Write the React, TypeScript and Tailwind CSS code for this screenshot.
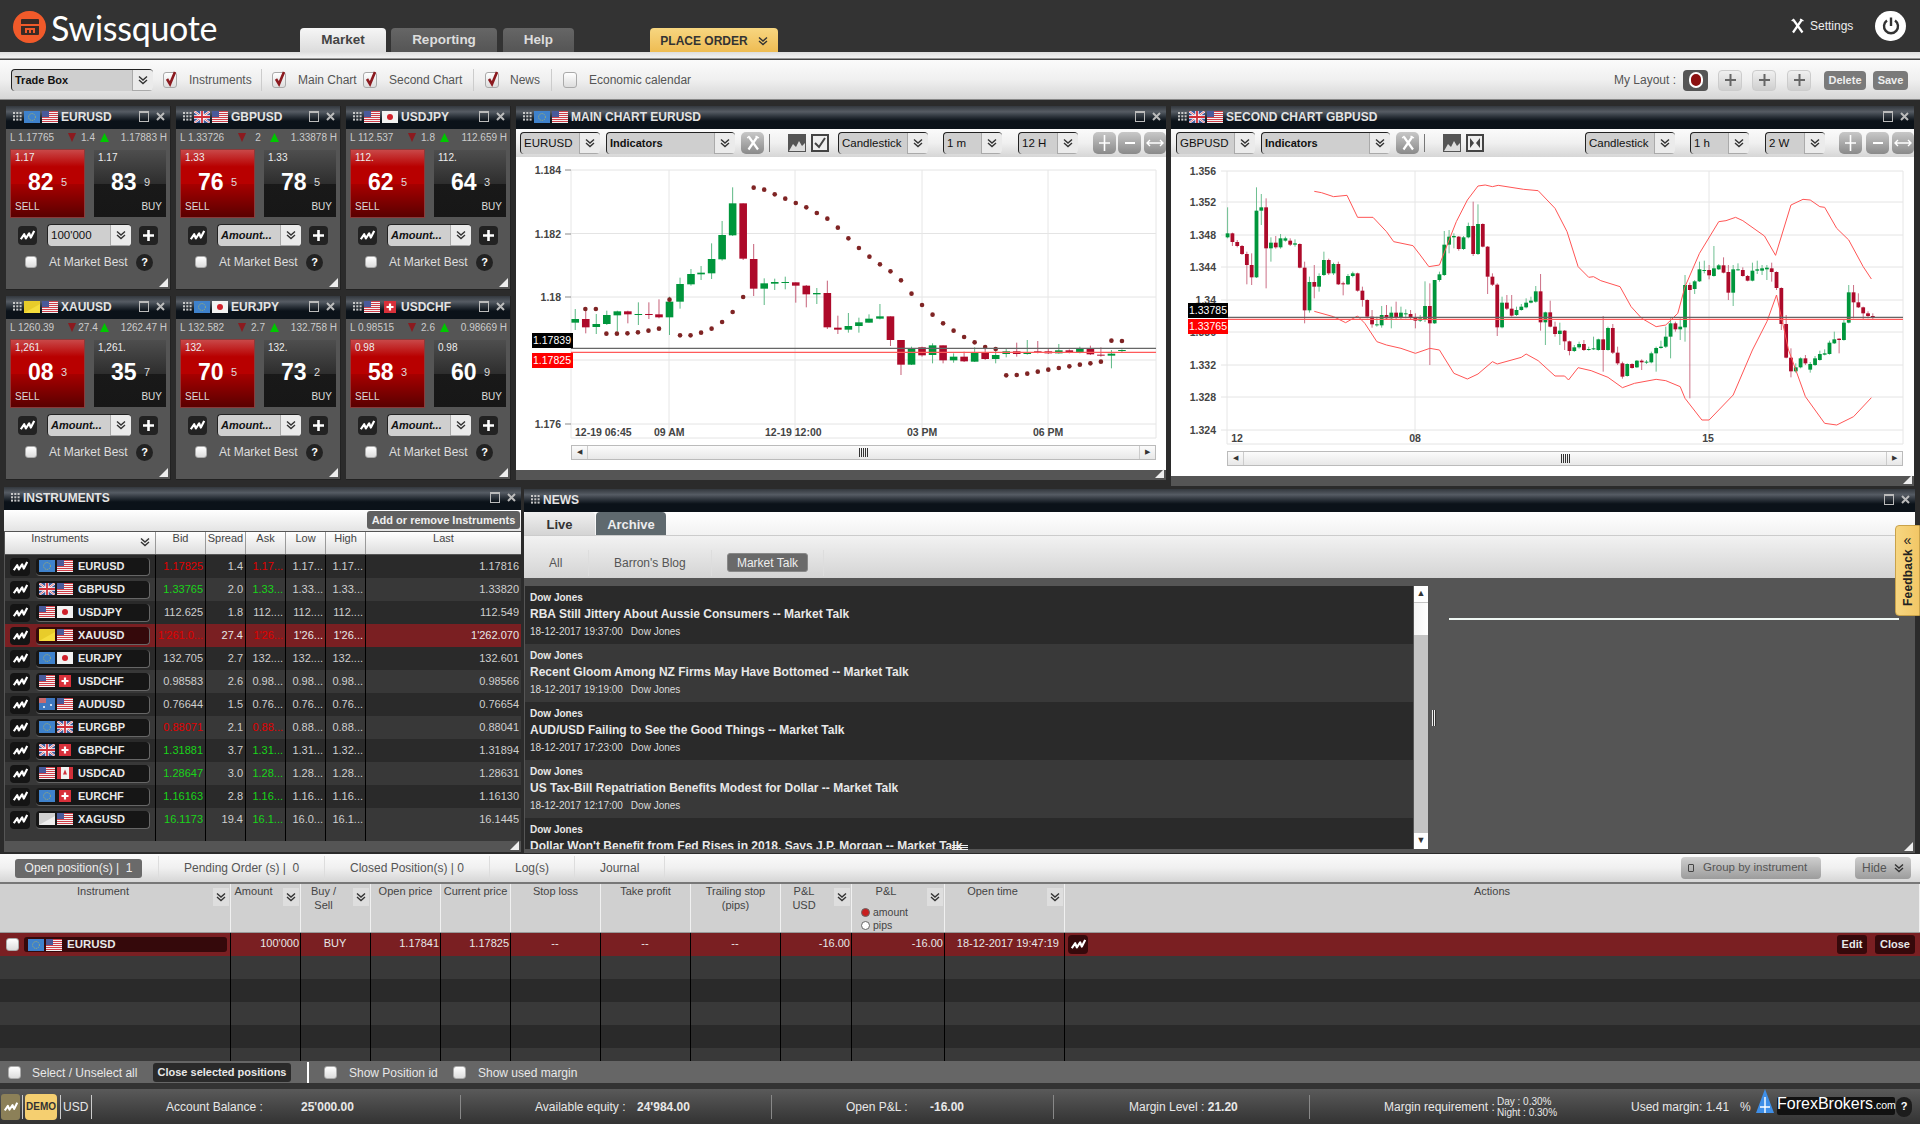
import React from "react";

const CHEV_BTN = "flex items-center justify-center";

function Chevs({ className = "text-[#333]" }: { className?: string }) {
  return (
    <svg width="10" height="10" viewBox="0 0 10 10" className={className} fill="none" stroke="currentColor" strokeWidth="1.4">
      <path d="M1 1.5 L5 5 L9 1.5" />
      <path d="M1 5 L5 8.5 L9 5" />
    </svg>
  );
}

function Zig({ w = 15, h = 11 }: { w?: number; h?: number }) {
  return (
    <svg width={w} height={h} viewBox="0 0 18 13" fill="none" stroke="white" strokeWidth="2.6" strokeLinejoin="round">
      <path d="M1 11 L5 5 L7 10 L11 4 L13 9 L17 1" />
    </svg>
  );
}

function ChartBtn({ className = "w-[19px] h-[19px] bg-[#222]" }: { className?: string }) {
  return (
    <div className={`${className} rounded-[4px] flex items-center justify-center shrink-0`}>
      <Zig />
    </div>
  );
}

function Flag({ code }: { code: string }) {
  let inner: React.ReactNode = null;
  if (code === "US") {
    inner = (
      <>
        <rect width="16" height="12" fill="#f4f4f4" />
        {[0, 2, 4, 6, 8, 10].map((y) => (
          <rect key={y} y={y} width="16" height="1" fill="#d0404a" />
        ))}
        <rect width="7" height="6" fill="#4a5a9a" />
      </>
    );
  } else if (code === "EU") {
    inner = (
      <>
        <rect width="16" height="12" fill="#3f82cc" />
        <circle cx="8" cy="6" r="3.4" fill="none" stroke="#b8b85a" strokeWidth="0.9" strokeDasharray="1 1" />
      </>
    );
  } else if (code === "GB") {
    inner = (
      <>
        <rect width="16" height="12" fill="#3b5a9e" />
        <path d="M0 0 L16 12 M16 0 L0 12" stroke="#fff" strokeWidth="2.2" />
        <path d="M0 0 L16 12 M16 0 L0 12" stroke="#d0404a" strokeWidth="0.8" />
        <path d="M8 0 V12 M0 6 H16" stroke="#fff" strokeWidth="3.4" />
        <path d="M8 0 V12 M0 6 H16" stroke="#d0303a" strokeWidth="1.8" />
      </>
    );
  } else if (code === "JP") {
    inner = (
      <>
        <rect width="16" height="12" fill="#f2f2f2" />
        <circle cx="8" cy="6" r="3" fill="#d0202a" />
      </>
    );
  } else if (code === "CH") {
    inner = (
      <>
        <rect x="2" width="12" height="12" fill="#d8303a" />
        <path d="M8 2.5 V9.5 M4.5 6 H11.5" stroke="#fff" strokeWidth="2.2" />
      </>
    );
  } else if (code === "AU") {
    inner = (
      <>
        <rect width="16" height="12" fill="#3f78c0" />
        <rect width="7" height="5" fill="#c86a70" />
        <circle cx="12" cy="7" r="1" fill="#fff" />
        <circle cx="5" cy="9" r="1" fill="#fff" />
      </>
    );
  } else if (code === "CA") {
    inner = (
      <>
        <rect width="16" height="12" fill="#f2f2f2" />
        <rect width="4" height="12" fill="#d0303a" />
        <rect x="12" width="4" height="12" fill="#d0303a" />
        <path d="M8 2.5 L10 7.5 H6 Z" fill="#d0303a" />
      </>
    );
  } else if (code === "XAU") {
    inner = (
      <>
        <rect width="16" height="12" fill="#e8cc2a" />
        <path d="M0 12 L16 3 V12 Z" fill="#f5dd3c" />
      </>
    );
  } else {
    inner = (
      <>
        <rect width="16" height="12" fill="#d0d0d0" />
        <path d="M0 12 L16 3 V12 Z" fill="#eeeeee" />
      </>
    );
  }
  return (
    <svg width="16" height="12" viewBox="0 0 16 12" className="shrink-0">
      {inner}
    </svg>
  );
}

function Check({ checked = false, size = "w-[14px] h-[16px]" }: { checked?: boolean; size?: string }) {
  return (
    <div className={`${size} rounded-[3px] bg-gradient-to-b from-[#ffffff] to-[#dddddd] border border-[#aaa] shrink-0 relative`}>
      {checked && (
        <svg width="14" height="18" viewBox="0 0 14 18" className="absolute left-[0px] -top-[3px]" fill="none" stroke="#8c1a1f" strokeWidth="2.6">
          <path d="M3 9 L6 14 L11 2" />
        </svg>
      )}
    </div>
  );
}

function Combo({ label, w, italic, bold = true }: { label: string; w: string; italic?: boolean; bold?: boolean }) {
  return (
    <div className={`${w} h-[22px] shrink-0 flex rounded-[4px] border-t border-l border-[#222] bg-[#cfcfcf] overflow-hidden`}>
      <div className={`flex-1 min-w-0 pl-[3px] flex items-center text-[#111] whitespace-nowrap ${bold ? "font-bold text-[11px]" : "text-[11.5px]"} ${italic ? "italic" : ""}`}>
        {label}
      </div>
      <div className={`${CHEV_BTN} w-[21px] h-[21px] bg-[#ebebeb] border-l border-[#aaa] border-b`}>
        <Chevs />
      </div>
    </div>
  );
}

function GridDots() {
  return (
    <svg width="9" height="9" viewBox="0 0 9 9" className="shrink-0" fill="#c8c8c8">
      {[0, 3.3, 6.6].flatMap((y) => [0, 3.3, 6.6].map((x) => <rect key={`${x}-${y}`} x={x} y={y} width="2" height="2" />))}
    </svg>
  );
}

function WinBtns() {
  return (
    <div className="ml-auto flex items-center gap-[7px] pr-[5px] shrink-0">
      <div className="w-[10px] h-[11px] border border-[#bbb] border-t-2" />
      <svg width="9" height="9" viewBox="0 0 9 9" stroke="#bbb" strokeWidth="2">
        <path d="M1 1 L8 8 M8 1 L1 8" />
      </svg>
    </div>
  );
}

const headGrad = "bg-gradient-to-b from-[#33383e] via-[#565c64] via-25% to-[#0b1219] to-65%";

function PanelHead({ children }: { children: React.ReactNode }) {
  return (
    <div className={`h-[23px] shrink-0 flex items-center pl-[7px] pb-[2px] gap-[2px] ${headGrad} text-[12px] font-bold text-[#e4e4e4] whitespace-nowrap`}>
      <GridDots />
      {children}
      <WinBtns />
    </div>
  );
}

function Corner() {
  return (
    <svg width="9" height="9" viewBox="0 0 9 9" className="absolute right-[2px] bottom-[2px]">
      <path d="M9 0 V9 H0 Z" fill="#eee" />
    </svg>
  );
}

type Box = {
  a: string;
  b: string;
  name: string;
  low: string;
  spread: string;
  high: string;
  sPre: string;
  sBig: string;
  sPip: string;
  bBig: string;
  bPip: string;
  amount?: string;
};

const boxes: Box[] = [
  { a: "EU", b: "US", name: "EURUSD", low: "L 1.17765", spread: "1.4", high: "1.17883 H", sPre: "1.17", sBig: "82", sPip: "5", bBig: "83", bPip: "9", amount: "100'000" },
  { a: "GB", b: "US", name: "GBPUSD", low: "L 1.33726", spread: "2", high: "1.33878 H", sPre: "1.33", sBig: "76", sPip: "5", bBig: "78", bPip: "5" },
  { a: "US", b: "JP", name: "USDJPY", low: "L 112.537", spread: "1.8", high: "112.659 H", sPre: "112.", sBig: "62", sPip: "5", bBig: "64", bPip: "3" },
  { a: "XAU", b: "US", name: "XAUUSD", low: "L 1260.39", spread: "27.4", high: "1262.47 H", sPre: "1,261.", sBig: "08", sPip: "3", bBig: "35", bPip: "7" },
  { a: "EU", b: "JP", name: "EURJPY", low: "L 132.582", spread: "2.7", high: "132.758 H", sPre: "132.", sBig: "70", sPip: "5", bBig: "73", bPip: "2" },
  { a: "US", b: "CH", name: "USDCHF", low: "L 0.98515", spread: "2.6", high: "0.98669 H", sPre: "0.98", sBig: "58", sPip: "3", bBig: "60", bPip: "9" },
];

function Tile({ side, pre, big, pip }: { side: "SELL" | "BUY"; pre: string; big: string; pip: string }) {
  const sell = side === "SELL";
  return (
    <div
      className={`h-[69px] grid grid-rows-[16px_32px_21px] text-white border ${
        sell
          ? "w-[75px] border-[#8a3a3a] bg-[linear-gradient(#c94848_0%,#b80000_25%,#b80000_50%,#a80000_50%,#5a0000_100%)]"
          : "w-[74px] border-[#555] bg-[linear-gradient(#4e4e4e_0%,#2e2e2e_50%,#191919_50%,#171717_100%)]"
      }`}
    >
      <div className="pl-[4px] text-[10px] leading-[16px] text-[#eee]">{pre}</div>
      <div className="pl-[17px] flex items-center">
        <span className="text-[23px] font-bold w-[33px]">{big}</span>
        <span className="text-[11px] text-[#ddd]">{pip}</span>
      </div>
      <div className={`px-[4px] text-[10px] text-[#ddd] leading-[18px] ${sell ? "text-left" : "text-right"}`}>{side}</div>
    </div>
  );
}

function TradeBox({ b }: { b: Box }) {
  return (
    <div className="w-[165px] h-[184px] bg-[#555] relative flex flex-col border-r border-b border-[#222]">
      <PanelHead>
        <Flag code={b.a} />
        <Flag code={b.b} />
        <span className="ml-[1px]">{b.name}</span>
      </PanelHead>
      <div className="h-[16px] flex items-center pl-[4px] pr-[3px] text-[10px] text-[#ccc] whitespace-nowrap">
        <span className="w-[58px] shrink-0">{b.low}</span>
        <svg width="8" height="9" viewBox="0 0 8 9" className="shrink-0" fill="#8c1a1f">
          <path d="M0 0 H8 L4 9 Z" />
        </svg>
        <span className="w-[24px] text-center shrink-0">{b.spread}</span>
        <svg width="9" height="9" viewBox="0 0 9 9" className="shrink-0" fill="#00c800">
          <path d="M0 9 H9 L4.5 0 Z" />
        </svg>
        <span className="flex-1 text-right">{b.high}</span>
      </div>
      <div className="mt-[4px] pl-[4px] flex gap-[8px]">
        <Tile side="SELL" pre={b.sPre} big={b.sBig} pip={b.sPip} />
        <Tile side="BUY" pre={b.sPre} big={b.bBig} pip={b.bPip} />
      </div>
      <div className="mt-[6px] h-[22px] flex items-center pl-[12px]">
        <ChartBtn />
        <Combo label={b.amount ?? "Amount..."} w="w-[84px] ml-[10px]" italic={!b.amount} bold={!b.amount} />
        <div className="ml-[8px] w-[19px] h-[19px] rounded-[4px] bg-[#222] flex items-center justify-center">
          <svg width="11" height="11" viewBox="0 0 11 11" stroke="white" strokeWidth="2.6">
            <path d="M5.5 0 V11 M0 5.5 H11" />
          </svg>
        </div>
      </div>
      <div className="mt-[6px] h-[20px] flex items-center pl-[19px] text-[12px] text-[#ddd]">
        <Check size="w-[12px] h-[12px]" />
        <span className="ml-[12px] w-[87px] whitespace-nowrap">At Market Best</span>
        <div className="w-[17px] h-[17px] rounded-full bg-[#222] text-white text-[11px] font-bold flex items-center justify-center">?</div>
      </div>
      <Corner />
    </div>
  );
}

// [green, bodyTop, bodyBottom, wickTop, wickBottom] in reference crop units
type Candle = [number, number, number, number, number];

const mainCandles: [number, number, number, number, number, number][] = [
  [155, 1, 507, 518, 477, 540], [180, 0, 507, 532, 480, 550], [205, 1, 522, 531, 492, 552], [230, 1, 495, 522, 482, 525],
  [255, 1, 484, 496, 482, 545], [280, 0, 484, 493, 482, 520], [305, 1, 492, 495, 457, 525], [330, 0, 492, 495, 457, 507],
  [354, 0, 493, 502, 448, 505], [379, 1, 455, 502, 440, 555], [404, 1, 402, 455, 383, 476], [430, 1, 372, 403, 357, 407],
  [454, 1, 368, 373, 348, 390], [479, 1, 327, 370, 280, 387], [504, 1, 255, 328, 213, 332], [529, 1, 160, 256, 112, 258],
  [554, 0, 160, 326, 160, 330], [579, 0, 327, 416, 282, 438], [604, 1, 400, 416, 385, 465], [629, 1, 396, 401, 386, 420],
  [654, 1, 396, 399, 380, 418], [679, 0, 397, 407, 397, 458], [704, 0, 407, 433, 405, 472], [729, 1, 429, 433, 414, 462],
  [754, 0, 429, 532, 392, 537], [779, 0, 533, 539, 497, 552], [804, 1, 528, 539, 489, 548], [829, 1, 517, 528, 503, 548],
  [853, 1, 506, 518, 493, 518], [879, 1, 499, 506, 462, 508], [904, 0, 499, 570, 499, 588], [929, 0, 570, 644, 570, 675],
  [954, 1, 594, 644, 590, 645], [979, 0, 592, 616, 590, 620], [1004, 1, 586, 615, 580, 640], [1029, 0, 586, 631, 586, 640],
  [1054, 1, 620, 631, 610, 638], [1079, 0, 620, 634, 605, 636], [1104, 1, 609, 635, 592, 636], [1129, 0, 609, 627, 585, 630],
  [1154, 1, 615, 627, 600, 640], [1179, 1, 604, 612, 595, 622], [1204, 0, 604, 612, 578, 620], [1229, 1, 607, 612, 570, 614],
  [1254, 0, 604, 607, 573, 610], [1279, 0, 604, 610, 595, 612], [1304, 1, 601, 610, 582, 611], [1329, 0, 601, 609, 598, 610],
  [1354, 1, 595, 608, 590, 610], [1379, 0, 595, 613, 587, 615], [1404, 0, 614, 617, 592, 620], [1429, 1, 611, 617, 600, 655],
  [1454, 1, 600, 602, 598, 606],
];

const dots: [number, number][] = [
  [579, 113], [604, 119], [629, 133], [654, 146], [679, 159], [704, 172], [729, 189], [754, 206], [779, 233], [804, 265],
  [829, 294], [854, 320], [879, 343], [904, 364], [929, 391], [954, 431], [979, 465], [1004, 494], [1029, 520], [1054, 542],
  [1079, 561], [1104, 577], [1129, 591], [1154, 597], [179, 477], [204, 477], [229, 551], [254, 551], [279, 550], [304, 547],
  [329, 542], [354, 536], [379, 449], [404, 556], [429, 556], [454, 548], [479, 536], [504, 516], [529, 486], [554, 441],
  [1179, 676], [1204, 675], [1229, 671], [1254, 665], [1279, 659], [1304, 654], [1329, 649], [1354, 644], [1379, 640],
  [1404, 635], [1429, 572], [1454, 573],
];

// second chart: candles run from x=130, one every 10 units
const secondCandles: Candle[] = [
  [1, 250, 262, 172, 265], [0, 250, 276, 248, 288], [0, 276, 288, 270, 292], [0, 288, 312, 285, 315], [0, 312, 345, 305, 403],
  [0, 345, 382, 310, 405], [1, 182, 382, 112, 384], [1, 172, 182, 132, 225], [0, 172, 295, 145, 415], [1, 278, 295, 262, 335],
  [0, 278, 292, 258, 296], [1, 265, 292, 252, 296], [1, 265, 272, 260, 275], [0, 272, 284, 265, 288], [1, 280, 284, 268, 290],
  [0, 282, 353, 280, 355], [0, 353, 481, 335, 520], [1, 396, 481, 380, 488], [0, 396, 410, 345, 445], [1, 378, 410, 370, 425],
  [1, 330, 375, 305, 378], [0, 330, 370, 326, 375], [1, 342, 370, 338, 375], [0, 342, 403, 335, 405], [0, 400, 403, 395, 436],
  [1, 378, 403, 372, 405], [1, 370, 378, 365, 382], [0, 370, 422, 368, 425], [0, 422, 450, 410, 470], [0, 450, 500, 448, 505],
  [0, 500, 523, 480, 533], [1, 523, 526, 500, 530], [1, 495, 526, 468, 533], [0, 495, 505, 465, 510], [1, 488, 505, 470, 535],
  [0, 488, 503, 455, 510], [1, 488, 503, 470, 510], [1, 490, 492, 478, 505], [0, 492, 503, 480, 508], [0, 503, 512, 490, 535],
  [1, 505, 512, 495, 516], [1, 468, 510, 394, 516], [0, 468, 520, 400, 645], [1, 390, 520, 412, 522], [1, 373, 390, 365, 395],
  [1, 284, 375, 243, 378], [1, 260, 284, 240, 310], [1, 258, 262, 250, 295], [0, 260, 297, 258, 302], [1, 262, 297, 258, 300],
  [1, 228, 262, 218, 265], [0, 228, 312, 155, 318], [1, 222, 312, 163, 315], [0, 222, 290, 220, 292], [0, 290, 380, 288, 432],
  [0, 380, 404, 370, 408], [0, 404, 532, 400, 558], [1, 458, 532, 440, 535], [0, 458, 476, 435, 480], [0, 476, 497, 435, 500],
  [1, 480, 495, 470, 498], [1, 470, 480, 462, 482], [1, 458, 472, 445, 475], [1, 452, 458, 440, 460], [1, 424, 455, 408, 458],
  [0, 424, 517, 372, 542], [1, 487, 517, 485, 585], [0, 487, 530, 452, 532], [0, 530, 552, 515, 560], [1, 542, 552, 518, 585],
  [0, 542, 574, 540, 600], [0, 574, 603, 572, 616], [1, 592, 603, 585, 606], [1, 582, 592, 575, 596], [0, 582, 600, 570, 603],
  [1, 597, 599, 590, 602], [1, 595, 598, 560, 600], [1, 568, 600, 566, 602], [0, 568, 600, 498, 665], [1, 534, 600, 530, 602],
  [0, 534, 608, 522, 612], [0, 608, 640, 590, 645], [0, 640, 680, 635, 686], [1, 642, 678, 640, 680], [0, 642, 654, 640, 656],
  [1, 632, 652, 630, 654], [0, 632, 637, 628, 660], [1, 635, 638, 630, 642], [1, 610, 637, 605, 640], [1, 594, 610, 590, 665],
  [1, 590, 594, 572, 596], [1, 560, 590, 530, 594], [1, 520, 560, 505, 625], [0, 520, 538, 515, 545], [1, 530, 538, 505, 570],
  [1, 405, 532, 375, 575], [0, 405, 420, 398, 745], [1, 394, 417, 390, 432], [1, 358, 394, 335, 396], [1, 360, 362, 332, 370],
  [0, 360, 376, 345, 388], [1, 355, 378, 288, 380], [1, 346, 358, 342, 360], [0, 346, 368, 322, 370], [0, 366, 428, 345, 450],
  [1, 358, 428, 345, 468], [1, 358, 360, 340, 362], [0, 360, 378, 352, 380], [0, 378, 392, 375, 394], [1, 362, 392, 338, 394],
  [1, 358, 362, 332, 372], [1, 355, 362, 345, 375], [1, 353, 358, 345, 390], [0, 355, 366, 338, 395], [0, 366, 414, 364, 420],
  [0, 414, 522, 412, 540], [0, 522, 623, 495, 625], [0, 623, 664, 595, 682], [1, 652, 664, 640, 668], [1, 625, 652, 622, 655],
  [0, 625, 640, 615, 645], [1, 642, 659, 636, 668], [1, 625, 645, 618, 648], [1, 612, 630, 602, 632], [1, 610, 614, 598, 616],
  [1, 578, 612, 572, 614], [1, 568, 580, 545, 582], [0, 566, 570, 565, 610], [1, 518, 570, 508, 572], [1, 427, 518, 405, 520],
  [0, 427, 457, 405, 505], [0, 457, 472, 430, 474], [0, 472, 490, 470, 508], [0, 490, 498, 484, 505], [0, 498, 503, 490, 510],
];

const upperBand =
  "310,124 325,128 350,140 378,136 400,202 432,202 460,245 475,275 515,287 530,315 548,350 570,345 590,270 605,215 628,150 650,108 665,105 680,110 692,106 745,118 775,122 810,175 835,245 858,350 880,382 890,380 905,392 945,410 968,470 990,505 1020,530 1040,525 1065,490 1080,410 1110,310 1150,215 1165,212 1185,202 1200,212 1245,258 1268,316 1300,165 1325,148 1340,150 1360,170 1370,172 1395,235 1420,270 1450,350 1467,387";
const lowerBand =
  "310,484 350,500 375,518 400,498 415,520 440,575 460,585 490,595 520,610 550,595 570,600 600,670 628,687 650,672 680,635 690,642 740,622 750,612 775,632 810,678 830,678 838,690 858,653 885,662 920,682 950,713 975,700 1020,688 1040,692 1070,710 1080,745 1115,810 1130,810 1180,735 1220,600 1250,515 1270,435 1295,600 1330,740 1370,820 1395,825 1430,800 1467,743";

const GREEN = "#00963c";
const RED = "#ad0a2a";

function MainChart() {
  const sx = (x: number) => x / 2.376 - 6;
  const sy = (y: number) => y / 3 - 7;
  const axis = "fill-[#444] text-[10.5px] font-bold";
  return (
    <svg width="650" height="286" className="shrink-0 block" fontFamily="'Liberation Sans',sans-serif">
      {[170, 233.5, 297, 360, 424].map((y) => (
        <line key={y} x1="55" x2="640" y1={y - 157} y2={y - 157} stroke="#e4e4e4" />
      ))}
      <line x1="55" x2="640" y1="281" y2="281" stroke="#e4e4e4" />
      {[55, 153, 279, 406, 532, 640].map((x) => (
        <line key={x} x1={x} x2={x} y1="13" y2="281" stroke="#e6e6e6" />
      ))}
      {[["1.184", 13], ["1.182", 77], ["1.18", 140], ["1.176", 267]].map(([t, y]) => (
        <text key={t} x="45" y={Number(y) + 4} textAnchor="end" className={axis}>
          {t}
        </text>
      ))}
      {[[44, 13], [44, 77], [44, 140], [44, 267]].map(([x, y]) => (
        <line key={y} x1={x + 5} x2={x + 11} y1={y} y2={y} stroke="#888" />
      ))}
      <text x="59" y="279" className={axis}>12-19 06:45</text>
      <text x="138" y="279" className={axis}>09 AM</text>
      <text x="249" y="279" className={axis}>12-19 12:00</text>
      <text x="391" y="279" className={axis}>03 PM</text>
      <text x="517" y="279" className={axis}>06 PM</text>
      {mainCandles.map(([x, g, t, b, wt, wb]) => (
        <g key={x}>
          <line x1={sx(x)} x2={sx(x)} y1={sy(wt)} y2={sy(wb)} stroke={g ? "#5cb884" : "#c66078"} />
          <rect x={sx(x) - 3.8} y={sy(t)} width="7.6" height={Math.max(1, (b - t) / 3)} fill={g ? GREEN : RED} />
        </g>
      ))}
      {dots.map(([x, y]) => (
        <circle key={`${x}-${y}`} cx={sx(x)} cy={sy(y)} r="2.3" fill="#7f2424" />
      ))}
      <line x1="55" x2="640" y1={sy(595)} y2={sy(595)} stroke="#666" strokeWidth="1.2" />
      <line x1="55" x2="640" y1={sy(607)} y2={sy(607)} stroke="#ff5a5a" strokeWidth="1.2" />
      <rect x="16" y="176" width="41" height="15" fill="#000" />
      <text x="36" y="187" textAnchor="middle" className="fill-white text-[10.5px]">1.17839</text>
      <rect x="16" y="196" width="41" height="15" fill="#f00" />
      <text x="36" y="207" textAnchor="middle" className="fill-white text-[10.5px]">1.17825</text>
    </svg>
  );
}

function SecondChart() {
  const k = 2.0768;
  const sx = (x: number) => x / k - 6;
  const sy = (y: number) => y / 3 - 7;
  const axis = "fill-[#444] text-[10.5px] font-bold";
  const pts = (s: string) =>
    s
      .split(" ")
      .map((p) => {
        const [x, y] = p.split(",").map(Number);
        return `${sx(x)},${sy(y)}`;
      })
      .join(" ");
  const ys: [string, number][] = [
    ["1.356", 14], ["1.352", 45], ["1.348", 78], ["1.344", 110], ["1.34", 143], ["1.336", 175], ["1.332", 208], ["1.328", 240], ["1.324", 273],
  ];
  return (
    <svg width="743" height="292" className="shrink-0 block" fontFamily="'Liberation Sans',sans-serif">
      {ys.map(([t, y]) => (
        <g key={t}>
          <line x1="50" x2="732" y1={y} y2={y} stroke="#e4e4e4" />
          <text x="45" y={y + 4} textAnchor="end" className={axis}>{t}</text>
        </g>
      ))}
      <line x1="56" x2="732" y1="287" y2="287" stroke="#e4e4e4" />
      {[56, 244, 538, 732].map((x) => (
        <line key={x} x1={x} x2={x} y1="14" y2="287" stroke="#e6e6e6" />
      ))}
      <text x="66" y="285" textAnchor="middle" className={axis}>12</text>
      <text x="244" y="285" textAnchor="middle" className={axis}>08</text>
      <text x="537" y="285" textAnchor="middle" className={axis}>15</text>
      {secondCandles.map(([g, t, b, wt, wb], i) => {
        const x = sx(130 + i * 10);
        return (
          <g key={i}>
            <line x1={x} x2={x} y1={sy(wt)} y2={sy(wb)} stroke={g ? "#5cb884" : "#c66078"} strokeWidth="0.9" />
            <rect x={x - 1.9} y={sy(t)} width="3.8" height={Math.max(1, (b - t) / 3)} fill={g ? GREEN : RED} />
          </g>
        );
      })}
      <polyline points={pts(upperBand)} fill="none" stroke="#f55" strokeWidth="1" />
      <polyline points={pts(lowerBand)} fill="none" stroke="#f55" strokeWidth="1" />
      <line x1="56" x2="732" y1={sy(502)} y2={sy(502)} stroke="#666" strokeWidth="1.2" />
      <line x1="56" x2="732" y1={sy(508)} y2={sy(508)} stroke="#ff5a5a" strokeWidth="1.2" />
      <rect x="17" y="146" width="40" height="15" fill="#000" />
      <text x="37" y="157" textAnchor="middle" className="fill-white text-[10.5px]">1.33785</text>
      <rect x="17" y="162" width="40" height="15" fill="#f00" />
      <text x="37" y="173" textAnchor="middle" className="fill-white text-[10.5px]">1.33765</text>
    </svg>
  );
}

function HScroll({ className }: { className: string }) {
  return (
    <div className={`${className} h-[15px] shrink-0 flex border border-[#bbb] bg-gradient-to-b from-[#fbfbfb] to-[#e8e8e8]`}>
      <div className="w-[15px] flex items-center justify-center text-[7px] text-[#333]">◀</div>
      <div className="flex-1 border-x border-[#ccc] flex items-center justify-center">
        <div className="w-[9px] h-[9px] bg-[repeating-linear-gradient(90deg,#333_0px,#333_1px,transparent_1px,transparent_2px)]" />
      </div>
      <div className="w-[15px] flex items-center justify-center text-[7px] text-[#333]">▶</div>
    </div>
  );
}

function RoundBtn({ children, w = "w-[23px]", ml = "" }: { children: React.ReactNode; w?: string; ml?: string }) {
  return (
    <div className={`${w} ${ml} h-[22px] shrink-0 rounded-[5px] bg-gradient-to-b from-[#c8c8c8] to-[#8a8a8a] flex items-center justify-center text-white`}>
      {children}
    </div>
  );
}

function Wrench({ w = 14, h = 16, color = "white" }: { w?: number; h?: number; color?: string }) {
  return (
    <svg width={w} height={h} viewBox="0 0 14 16" fill="none" stroke={color}>
      <path d="M3 2 L12 14.5" strokeWidth="2.2" />
      <path d="M11.5 1.5 L2.5 14.5" strokeWidth="2.2" />
      <path d="M1.2 3 L3.5 1 M9.5 1 L13 3" strokeWidth="1.4" />
    </svg>
  );
}

function Plus() {
  return (
    <svg width="13" height="16" viewBox="0 0 13 16" stroke="white" strokeWidth="1.6">
      <path d="M6.5 0 V16 M1 8 H12" />
    </svg>
  );
}

function ChartTools({ second }: { second?: boolean }) {
  return (
    <>
      <RoundBtn ml="ml-[6px]">
        <Wrench />
      </RoundBtn>
      <div className="ml-[5px] w-px h-[18px] bg-[#777] shrink-0" />
      <div className="ml-[18px] w-[18px] h-[18px] bg-[#555] shrink-0 flex items-end">
        <svg width="18" height="14" viewBox="0 0 18 14" fill="#ddd">
          <path d="M1 13 L5 6 L8 9 L11 3 L14 8 L17 5 V13 Z" />
        </svg>
      </div>
      <div className="ml-[5px] w-[18px] h-[18px] border-2 border-[#444] bg-[#eee] shrink-0 flex items-center justify-center">
        {second ? (
          <svg width="12" height="12" viewBox="0 0 12 12" fill="#444">
            <path d="M1 1 L5 6 L1 11 Z M11 1 L7 6 L11 11 Z" />
          </svg>
        ) : (
          <svg width="12" height="12" viewBox="0 0 12 12" fill="none" stroke="#444" strokeWidth="2">
            <path d="M1 6 L5 10 L11 1" />
          </svg>
        )}
      </div>
    </>
  );
}

function ZoomBtns({ firstMl, gap2 }: { firstMl: string; gap2: string }) {
  return (
    <>
      <RoundBtn ml={firstMl}>
        <Plus />
      </RoundBtn>
      <RoundBtn ml={gap2}>
        <div className="w-[10px] h-[2px] bg-white" />
      </RoundBtn>
      <RoundBtn w="w-[22px]" ml="ml-[3px]">
        <svg width="18" height="10" viewBox="0 0 18 10" fill="none" stroke="white" strokeWidth="1.4">
          <path d="M1 5 H17 M4 2 L1 5 L4 8 M14 2 L17 5 L14 8" />
        </svg>
      </RoundBtn>
    </>
  );
}

const toolGrad = "bg-gradient-to-b from-[#fbfbfb] via-[#f0f0f0] to-[#d6d6d6]";

type Row = { a: string; b: string; n: string; bid: string; bc?: string; sp: string; ask: string; low: string; high: string; last: string; hot?: boolean };

const G = "text-[#19d419]";
const R = "text-[#e00000]";
const rows: Row[] = [
  { a: "EU", b: "US", n: "EURUSD", bid: "1.17825", bc: R, sp: "1.4", ask: "1.17...", low: "1.17...", high: "1.17...", last: "1.17816" },
  { a: "GB", b: "US", n: "GBPUSD", bid: "1.33765", bc: G, sp: "2.0", ask: "1.33...", low: "1.33...", high: "1.33...", last: "1.33820" },
  { a: "US", b: "JP", n: "USDJPY", bid: "112.625", sp: "1.8", ask: "112....", low: "112....", high: "112....", last: "112.549" },
  { a: "XAU", b: "US", n: "XAUUSD", bid: "1'261.0...", bc: R, sp: "27.4", ask: "1'26...", low: "1'26...", high: "1'26...", last: "1'262.070", hot: true },
  { a: "EU", b: "JP", n: "EURJPY", bid: "132.705", sp: "2.7", ask: "132....", low: "132....", high: "132....", last: "132.601" },
  { a: "US", b: "CH", n: "USDCHF", bid: "0.98583", sp: "2.6", ask: "0.98...", low: "0.98...", high: "0.98...", last: "0.98566" },
  { a: "AU", b: "US", n: "AUDUSD", bid: "0.76644", sp: "1.5", ask: "0.76...", low: "0.76...", high: "0.76...", last: "0.76654" },
  { a: "EU", b: "GB", n: "EURGBP", bid: "0.88071", bc: R, sp: "2.1", ask: "0.88...", low: "0.88...", high: "0.88...", last: "0.88041" },
  { a: "GB", b: "CH", n: "GBPCHF", bid: "1.31881", bc: G, sp: "3.7", ask: "1.31...", low: "1.31...", high: "1.32...", last: "1.31894" },
  { a: "US", b: "CA", n: "USDCAD", bid: "1.28647", bc: G, sp: "3.0", ask: "1.28...", low: "1.28...", high: "1.28...", last: "1.28631" },
  { a: "EU", b: "CH", n: "EURCHF", bid: "1.16163", bc: G, sp: "2.8", ask: "1.16...", low: "1.16...", high: "1.16...", last: "1.16130" },
  { a: "XAG", b: "US", n: "XAGUSD", bid: "16.1173", bc: G, sp: "19.4", ask: "16.1...", low: "16.0...", high: "16.1...", last: "16.1445" },
];

const cols = "grid grid-cols-[151px_50px_40px_40px_40px_40px_155px]";
const cell = "border-r border-black text-right pr-[2px] leading-[22px] whitespace-nowrap overflow-hidden";

function Instruments() {
  return (
    <div className="ml-[4px] w-[517px] h-[365px] bg-[#555] relative flex flex-col shrink-0">
      <PanelHead>
        <span className="ml-[1px]">INSTRUMENTS</span>
      </PanelHead>
      <div className="h-[21px] shrink-0 bg-gradient-to-b from-[#ffffff] to-[#e4e4e4] flex justify-end items-start pr-[1px] pt-[1px]">
        <div className="w-[153px] h-[18px] rounded-[3px] bg-[#606060] text-[#eee] text-[11px] font-bold flex items-center justify-center whitespace-nowrap">
          Add or remove Instruments
        </div>
      </div>
      <div className={`${cols} h-[24px] ml-px shrink-0 bg-gradient-to-b from-[#ffffff] to-[#dddddd] border-t border-[#555] border-b text-[11px] leading-[13px] text-[#444] text-center`}>
        <div className="border-r border-[#999] relative pr-[40px]">
          Instruments
          <div className="absolute right-[5px] top-[5px]">
            <Chevs />
          </div>
        </div>
        {["Bid", "Spread", "Ask", "Low", "High"].map((h) => (
          <div key={h} className="border-r border-[#999]">
            {h}
          </div>
        ))}
        <div>Last</div>
      </div>
      <div className="flex-1 ml-px bg-[#383838] flex flex-col overflow-hidden text-[11px] text-[#cfcfcf]">
        {rows.map((r, i) => (
          <div key={r.n} className={`${cols} h-[23px] shrink-0 ${r.hot ? "bg-[#7a1f22] text-[#e8e8e8]" : i % 2 ? "bg-[#383838]" : "bg-[#2a2a2a]"}`}>
            <div className="border-r border-black flex items-center pl-[5px]">
              <ChartBtn className="w-[20px] h-[18px] bg-[#141414]" />
              <div className={`ml-[6px] w-[114px] h-[18px] rounded-[4px] border-b border-r border-[#666] flex items-center pl-[3px] gap-[2px] text-[#e8e8e8] font-bold ${r.hot ? "bg-[#35090b]" : "bg-[#161616]"}`}>
                <Flag code={r.a} />
                <Flag code={r.b} />
                <span className="ml-[3px]">{r.n}</span>
              </div>
            </div>
            <div className={`${cell} ${r.bc ?? ""}`}>{r.bid}</div>
            <div className={cell}>{r.sp}</div>
            <div className={`${cell} ${r.bc ?? ""}`}>{r.ask}</div>
            <div className={cell}>{r.low}</div>
            <div className={cell}>{r.high}</div>
            <div className="text-right pr-[2px] leading-[22px]">{r.last}</div>
          </div>
        ))}
        <div className={`${cols} flex-1`}>
          {[0, 1, 2, 3, 4, 5].map((c) => (
            <div key={c} className="border-r border-black" />
          ))}
        </div>
      </div>
      <div className="h-[11px] shrink-0" />
      <Corner />
    </div>
  );
}

const news = [
  ["RBA Still Jittery About Aussie Consumers -- Market Talk", "18-12-2017 19:37:00"],
  ["Recent Gloom Among NZ Firms May Have Bottomed -- Market Talk", "18-12-2017 19:19:00"],
  ["AUD/USD Failing to See the Good Things -- Market Talk", "18-12-2017 17:23:00"],
  ["US Tax-Bill Repatriation Benefits Modest for Dollar -- Market Talk", "18-12-2017 12:17:00"],
  ["Dollar Won't Benefit from Fed Rises in 2018, Says J.P. Morgan -- Market Talk", "18-12-2017 11:30:00"],
];

function News() {
  return (
    <div className="ml-[3px] mt-[2px] w-[1391px] h-[364px] bg-[#555] relative flex flex-col shrink-0">
      <PanelHead>
        <span className="ml-[1px]">NEWS</span>
      </PanelHead>
      <div className="h-[24px] shrink-0 flex bg-gradient-to-b from-[#ffffff] to-[#f2f2f2] border-b border-[#ccc] text-[13px] font-bold">
        <div className="w-[71px] pt-[2px] rounded-t-[4px] bg-gradient-to-b from-[#f0f0f0] to-[#d4d4d4] text-[#333] flex items-center justify-center">Live</div>
        <div className="ml-px w-[70px] pt-[2px] rounded-t-[4px] bg-[#5f696e] text-[#eee] flex items-center justify-center">Archive</div>
      </div>
      <div className="h-[42px] pt-[11px] shrink-0 bg-gradient-to-b from-[#f2f2f2] to-[#d4d4d4] flex items-center text-[12px] text-[#555]">
        <span className="ml-[25px] w-[39px]">All</span>
        <div className="w-px h-[26px] bg-[#ddd]" />
        <span className="ml-[25px] w-[97px] whitespace-nowrap">Barron's Blog</span>
        <div className="w-px h-[26px] bg-[#ddd]" />
        <div className="ml-[15px] w-[81px] h-[19px] rounded-[3px] bg-[#6a6a6a] border border-[#888] text-[#eee] flex items-center justify-center whitespace-nowrap">Market Talk</div>
        <div className="ml-[15px] w-px h-[26px] bg-[#ddd]" />
      </div>
      <div className="flex-1 min-h-0 flex pt-[8px] pl-px">
        <div className="w-[888px] h-[263px] shrink-0 overflow-hidden">
          {news.map(([t, d], i) => (
            <div key={t} className={`h-[58px] pl-[5px] pt-[6px] text-[#e8e8e8] whitespace-nowrap ${i % 2 ? "bg-[#393939]" : "bg-[#2a2a2a]"}`}>
              <div className="text-[10px] font-bold leading-[12px]">Dow Jones</div>
              <div className="mt-[3px] text-[12px] font-bold leading-[14px]">{t}</div>
              <div className="mt-[5px] text-[10px] leading-[12px] text-[#ddd]">
                {d}
                <span className="ml-[8px]">Dow Jones</span>
              </div>
            </div>
          ))}
        </div>
        <div className="w-[14px] h-[263px] ml-px shrink-0 bg-[#c4c4c4] flex flex-col">
          <div className="h-[16px] bg-white flex items-center justify-center text-[9px] text-[#333]">▲</div>
          <div className="h-[32px] bg-gradient-to-r from-[#f4f4f4] to-white mt-px" />
          <div className="flex-1" />
          <div className="h-[16px] bg-white flex items-center justify-center text-[9px] text-[#333]">▼</div>
        </div>
        <div className="flex-1 relative">
          <div className="absolute left-[4px] top-[124px] w-[4px] h-[16px] bg-[repeating-linear-gradient(90deg,#eee_0px,#eee_1px,#333_1px,#333_2px)]" />
          <div className="absolute left-[21px] top-[32px] w-[450px] h-[2px] bg-[#f0f8f4]" />
        </div>
      </div>
      {/* little drag handle over the end of the last headline */}
      <div className="absolute left-[428px] top-[355px] w-[16px] h-[6px] bg-[repeating-linear-gradient(0deg,#eee_0px,#eee_1px,transparent_1px,transparent_2px)]" />
      <Corner />
    </div>
  );
}

const posCols = "grid grid-cols-[231px_70px_70px_70px_70px_90px_90px_90px_71px_93px_120px_855px]";

function SortBox() {
  return (
    <div className="absolute right-[1px] top-[4px] w-[16px] h-[18px] bg-[#dedede] flex items-center justify-center">
      <Chevs />
    </div>
  );
}

function Positions() {
  const heads: [React.ReactNode, boolean][] = [
    ["Instrument", true],
    ["Amount", true],
    [<>Buy /<br />Sell</>, true],
    ["Open price", false],
    ["Current price", false],
    ["Stop loss", false],
    ["Take profit", false],
    [<>Trailing stop<br />(pips)</>, false],
    [<>P&amp;L<br />USD</>, true],
    ["P&L", true],
    ["Open time", true],
    ["Actions", false],
  ];
  const vals = ["100'000", "BUY", "1.17841", "1.17825", "--", "--", "--", "-16.00", "-16.00", "18-12-2017 19:47:19"];
  const aligns = ["text-right", "text-center", "text-right", "text-right", "text-center", "text-center", "text-center", "text-right", "text-right", "text-right"];
  return (
    <div className="h-[207px] shrink-0 flex flex-col">
      <div className={`h-[28px] shrink-0 flex items-center ${toolGrad} text-[12px] text-[#555] whitespace-nowrap`}>
        <div className="ml-[15px] w-[127px] h-[19px] rounded-[3px] bg-[#6a6a6a] text-[#eee] flex items-center justify-center">Open position(s) |&nbsp;&nbsp;1</div>
        <div className="ml-[16px] w-px h-[24px] bg-[#ddd]" />
        <span className="ml-[25px] w-[140px]">Pending Order (s) |&nbsp;&nbsp;0</span>
        <div className="w-px h-[24px] bg-[#ddd]" />
        <span className="ml-[25px] w-[139px]">Closed Position(s) | 0</span>
        <div className="w-px h-[24px] bg-[#ddd]" />
        <span className="ml-[25px] w-[59px]">Log(s)</span>
        <div className="w-px h-[24px] bg-[#ddd]" />
        <span className="ml-[25px] w-[64px]">Journal</span>
        <div className="w-px h-[24px] bg-[#ddd]" />
        <div className="ml-auto w-[140px] h-[22px] rounded-[4px] bg-gradient-to-b from-[#cfcfcf] to-[#9c9c9c] flex items-center pl-[7px] gap-[9px] text-[11.5px]">
          <div className="w-[6px] h-[8px] border border-[#444] rounded-[1px]" />
          <span>Group by instrument</span>
        </div>
        <div className="ml-[34px] mr-[9px] w-[56px] h-[22px] rounded-[4px] bg-gradient-to-b from-[#cfcfcf] to-[#9c9c9c] flex items-center justify-between px-[7px]">
          <span>Hide</span>
          <Chevs />
        </div>
      </div>
      <div className={`${posCols} h-[51px] shrink-0 bg-[#d0d0d0] border-t-2 border-[#777] border-b border-b-[#999] text-[11px] leading-[14px] text-[#444] text-center`}>
        {heads.map(([h, sort], i) => (
          <div key={i} className={`relative border-r border-[#f0f0f0] ${sort ? "pr-[24px]" : ""}`}>
            {h}
            {sort && <SortBox />}
            {i === 9 && (
              <div className="absolute left-[9px] top-[22px] text-left leading-[13px] text-[10.5px]">
                <div className="flex items-center gap-[3px]">
                  <div className="w-[9px] h-[9px] rounded-full bg-[#c81e1e] border border-[#666]" />
                  amount
                </div>
                <div className="flex items-center gap-[3px]">
                  <div className="w-[9px] h-[9px] rounded-full bg-white border border-[#666]" />
                  pips
                </div>
              </div>
            )}
          </div>
        ))}
      </div>
      <div className="flex-1 flex flex-col overflow-hidden text-[11px] text-[#e8e8e8]">
        <div className={`${posCols} h-[23px] shrink-0 bg-[#7a1f22]`}>
          <div className="border-r border-black flex items-center pl-[6px]">
            <Check size="w-[13px] h-[13px]" />
            <div className="ml-[5px] w-[203px] h-[15px] rounded-[3px] bg-[#35090b] flex items-center pl-[4px] gap-[2px] font-bold">
              <Flag code="EU" />
              <Flag code="US" />
              <span className="ml-[3px] text-[11.5px]">EURUSD</span>
            </div>
          </div>
          {vals.map((v, i) => (
            <div key={i} className={`border-r border-black pr-[1px] leading-[21px] whitespace-nowrap ${aligns[i]} ${i === 9 ? "pr-[5px]" : ""}`}>
              {v}
            </div>
          ))}
          <div className="flex items-center pl-[3px] pr-[5px]">
            <ChartBtn className="w-[20px] h-[19px] bg-[#35090b]" />
            <div className="ml-auto w-[30px] h-[19px] rounded-[3px] bg-[#35090b] font-bold flex items-center justify-center">Edit</div>
            <div className="ml-[8px] w-[40px] h-[19px] rounded-[3px] bg-[#35090b] font-bold flex items-center justify-center">Close</div>
          </div>
        </div>
        {["bg-[#393939] h-[23px]", "bg-[#2a2a2a] h-[23px]", "bg-[#393939] h-[23px]", "bg-[#2a2a2a] h-[23px]", "bg-[#393939] flex-1"].map((c, r) => (
          <div key={r} className={`${posCols} ${c} shrink-0`}>
            {Array.from({ length: 11 }).map((_, i) => (
              <div key={i} className="border-r border-black" />
            ))}
          </div>
        ))}
      </div>
    </div>
  );
}

function StatusBar() {
  const sep = <div className="w-px h-[24px] bg-[#888] shrink-0" />;
  return (
    <div className="flex-1 bg-gradient-to-b from-[#5a5a5a] to-[#333] flex items-center text-[12px] text-[#e8e8e8] whitespace-nowrap [&>*]:shrink-0">
      <div className="ml-px w-[19px] h-[26px] rounded-[3px] bg-[#8c8058] flex items-center justify-center">
        <Zig w={14} h={12} />
      </div>
      <div className="ml-[2px] w-px h-[24px] bg-[#ccc]" />
      <div className="ml-[2px] w-[32px] h-[26px] rounded-[4px] bg-[#f5cf70] text-[#333] text-[10px] font-bold flex items-center justify-center">DEMO</div>
      <div className="ml-[3px] w-px h-[24px] bg-[#ccc]" />
      <span className="ml-[2px] w-[28px]">USD</span>
      <div className="w-px h-[24px] bg-[#ccc]" />
      <span className="ml-[74px] w-[135px]">Account Balance :</span>
      <span className="w-[159px] font-bold">25'000.00</span>
      {sep}
      <span className="ml-[74px] w-[102px]">Available equity :</span>
      <span className="w-[134px] font-bold">24'984.00</span>
      {sep}
      <span className="ml-[74px] w-[84px]">Open P&amp;L :</span>
      <span className="w-[123px] font-bold">-16.00</span>
      {sep}
      <span className="ml-[75px] w-[180px]">
        Margin Level : <b>21.20</b>
      </span>
      {sep}
      <span className="ml-[74px] w-[113px]">Margin requirement :</span>
      <div className="w-[134px] text-[10px] leading-[11px]">
        <div>Day : 0.30%</div>
        <div>Night : 0.30%</div>
      </div>
      <span className="w-[109px]">Used margin: 1.41</span>
      <span className="w-[16px]">%</span>
      <svg width="18" height="26" viewBox="0 0 18 26" className="-mt-[10px]">
        <path d="M9 0 L18 24 H0 Z" fill="#3f8fe8" />
        <path d="M9 8 V24 M4 18 H14" stroke="#fff" strokeWidth="1.4" />
      </svg>
      <div className="ml-[3px] w-[118px] h-[18px] bg-[#111] -mt-[1px] rounded-[2px] relative">
        <span className="absolute left-[0px] -top-[5px] text-[16px] text-white">
          ForexBrokers<span className="text-[10.5px]">.com</span>
        </span>
      </div>
      <div className="ml-px w-[16px] h-[20px] rounded-full bg-[#1c1c1c] text-white text-[11px] font-bold flex items-center justify-center">?</div>
    </div>
  );
}

export default function App() {
  return (
    <div className="relative w-[1920px] h-[1124px] bg-[#2b2b2b] overflow-hidden flex flex-col font-['Liberation_Sans',Arial,sans-serif]">
      {/* top bar */}
      <div className="h-[52px] shrink-0 bg-[#333] flex text-white">
        <div className="ml-[13px] mt-[11px] w-[33px] h-[32px] rounded-full bg-[#f15a2a] flex items-center justify-center shrink-0">
          <svg width="20" height="20" viewBox="0 0 20 20">
            <rect x="1" y="2" width="18" height="16" rx="1" fill="#3a2a25" />
            <rect x="1" y="7" width="18" height="2" fill="#f15a2a" />
            <path d="M5 11 H15 V16 H13 V13 H11 V16 H9 V13 H7 V16 H5 Z" fill="#f15a2a" />
          </svg>
        </div>
        <div className="ml-[5px] mt-[7px] w-[249px] text-[34px] leading-[42px] font-['Lato',sans-serif] tracking-[-0.3px]">Swissquote</div>
        <div className="mt-[28px] w-[86px] h-[24px] rounded-t-[4px] bg-gradient-to-b from-[#f6f6f6] to-[#dcdcdc] text-[#444] text-[13.5px] font-bold flex items-center justify-center">Market</div>
        <div className="ml-[5px] mt-[28px] w-[106px] h-[24px] rounded-t-[4px] bg-gradient-to-b from-[#666] to-[#555] text-[#ddd] text-[13.5px] font-bold flex items-center justify-center">Reporting</div>
        <div className="ml-[6px] mt-[28px] w-[71px] h-[24px] rounded-t-[4px] bg-gradient-to-b from-[#666] to-[#555] text-[#ddd] text-[13.5px] font-bold flex items-center justify-center">Help</div>
        <div className="ml-[76px] mt-[28px] w-[128px] h-[25px] rounded-t-[4px] bg-gradient-to-b from-[#f7d680] to-[#eebb50] text-[#333] text-[12px] font-bold flex items-center justify-center gap-[10px]">
          PLACE ORDER
          <Chevs />
        </div>
        <div className="ml-auto mt-[18px] h-[16px] flex items-center text-[12px] text-[#eee]">
          <Wrench w={15} h={16} />
          <span className="ml-[5px] w-[65px]">Settings</span>
        </div>
        <div className="mt-[11px] mr-[14px] w-[31px] h-[30px] rounded-full bg-white flex items-center justify-center shrink-0">
          <svg width="20" height="20" viewBox="0 0 20 20" fill="none" stroke="#333" strokeWidth="2.4">
            <path d="M6 4.5 A7 7 0 1 0 14 4.5" />
            <path d="M10 1.5 V10" />
          </svg>
        </div>
      </div>
      <div className="h-[7px] shrink-0 bg-gradient-to-b from-[#dedede] to-[#f2f2f2] border-b border-[#999]" />
      <div className="h-px shrink-0 bg-[#444]" />
      {/* toolbar */}
      <div className={`h-[40px] shrink-0 flex items-center ${toolGrad} border-b border-[#888] text-[12px] text-[#555] whitespace-nowrap pt-[1px]`}>
        <Combo label="Trade Box" w="w-[142px] ml-[11px]" />
        <div className="ml-[10px]">
          <Check checked />
        </div>
        <span className="ml-[12px] w-[72px]">Instruments</span>
        <div className="w-px h-[22px] bg-[#ccc]" />
        <div className="ml-[10px]">
          <Check checked />
        </div>
        <span className="ml-[12px] w-[65px]">Main Chart</span>
        <Check checked />
        <span className="ml-[12px] w-[84px]">Second Chart</span>
        <div className="w-px h-[22px] bg-[#ccc]" />
        <div className="ml-[11px]">
          <Check checked />
        </div>
        <span className="ml-[11px] w-[41px]">News</span>
        <div className="w-px h-[22px] bg-[#ccc]" />
        <div className="ml-[11px]">
          <Check />
        </div>
        <span className="ml-[12px]">Economic calendar</span>
        <span className="ml-auto">My Layout :</span>
        <div className="ml-[7px] w-[25px] h-[21px] rounded-[4px] bg-[#555] flex items-center justify-center">
          <div className="w-[14px] h-[16px] rounded-full bg-[#8c1010] border-2 border-white" />
        </div>
        {["ml-[10px]", "ml-[10px]", "ml-[11px]"].map((m, i) => (
          <div key={i} className={`${m} w-[24px] h-[21px] rounded-[4px] bg-gradient-to-b from-[#f0f0f0] to-[#cfcfcf] border border-[#ccc] flex items-center justify-center`}>
            <svg width="11" height="12" viewBox="0 0 11 12" stroke="#666" strokeWidth="2">
              <path d="M5.5 0 V12 M0 6 H11" />
            </svg>
          </div>
        ))}
        <div className="ml-[13px] w-[42px] h-[19px] rounded-[4px] bg-[#7a7a7a] text-[#eee] text-[11px] font-bold flex items-center justify-center">Delete</div>
        <div className="ml-[7px] mr-[12px] w-[35px] h-[19px] rounded-[4px] bg-[#7a7a7a] text-[#eee] text-[11px] font-bold flex items-center justify-center">Save</div>
      </div>

      {/* upper row */}
      <div className="h-[387px] shrink-0 pt-[6px] pl-[6px] flex items-start">
        <div className="grid grid-cols-[165px_165px_165px] gap-x-[5px] gap-y-[6px] w-[505px] shrink-0">
          {boxes.map((b) => (
            <TradeBox key={b.name} b={b} />
          ))}
        </div>
        <div className="ml-[5px] w-[650px] h-[374px] bg-[#555] relative shrink-0 flex flex-col">
          <PanelHead>
            <Flag code="EU" />
            <Flag code="US" />
            <span className="ml-[1px]">MAIN CHART EURUSD</span>
          </PanelHead>
          <div className={`h-[28px] shrink-0 flex items-center ${toolGrad}`}>
            <Combo label="EURUSD" w="w-[80px] ml-[4px]" bold={false} />
            <Combo label="Indicators" w="w-[129px] ml-[6px]" />
            <ChartTools />
            <Combo label="Candlestick" w="w-[90px] ml-[9px]" bold={false} />
            <Combo label="1 m" w="w-[59px] ml-[15px]" bold={false} />
            <Combo label="12 H" w="w-[60px] ml-[16px]" bold={false} />
            <ZoomBtns firstMl="ml-[15px]" gap2="ml-[2px]" />
          </div>
          <div className="h-[313px] shrink-0 bg-white flex flex-col">
            <MainChart />
            <HScroll className="mt-[2px] ml-[55px] w-[585px]" />
          </div>
          <Corner />
        </div>
        <div className="ml-[5px] w-[743px] h-[380px] bg-[#555] relative shrink-0 flex flex-col">
          <PanelHead>
            <Flag code="GB" />
            <Flag code="US" />
            <span className="ml-[1px]">SECOND CHART GBPUSD</span>
          </PanelHead>
          <div className={`h-[28px] shrink-0 flex items-center ${toolGrad}`}>
            <Combo label="GBPUSD" w="w-[79px] ml-[5px]" bold={false} />
            <Combo label="Indicators" w="w-[129px] ml-[6px]" />
            <ChartTools second />
            <Combo label="Candlestick" w="w-[90px] ml-[101px]" bold={false} />
            <Combo label="1 h" w="w-[59px] ml-[15px]" bold={false} />
            <Combo label="2 W" w="w-[60px] ml-[16px]" bold={false} />
            <ZoomBtns firstMl="ml-[14px]" gap2="ml-[4px]" />
          </div>
          <div className="h-[319px] shrink-0 bg-white flex flex-col">
            <SecondChart />
            <HScroll className="mt-[2px] ml-[56px] w-[676px]" />
          </div>
          <Corner />
        </div>
      </div>

      {/* lower row */}
      <div className="h-[367px] shrink-0 flex items-start">
        <Instruments />
        <News />
      </div>

      <Positions />
      <div className="h-[22px] shrink-0 bg-[#666] flex items-center pt-[1px] text-[12px] text-[#e8e8e8] whitespace-nowrap">
        <div className="ml-[8px]">
          <Check size="w-[13px] h-[13px]" />
        </div>
        <span className="ml-[11px] w-[121px]">Select / Unselect all</span>
        <div className="w-[138px] h-[19px] rounded-[3px] bg-[#2a2a2a] font-bold text-[11px] flex items-center justify-center">Close selected positions</div>
        <div className="ml-[16px] w-[2px] h-[22px] bg-white" />
        <div className="ml-[15px]">
          <Check size="w-[13px] h-[13px]" />
        </div>
        <span className="ml-[12px] w-[104px]">Show Position id</span>
        <Check size="w-[13px] h-[13px]" />
        <span className="ml-[12px]">Show used margin</span>
      </div>
      <div className="h-[6px] shrink-0 bg-[#333]" />
      <StatusBar />

      {/* feedback tab */}
      <div className="absolute right-0 top-[525px] w-[25px] h-[91px] rounded-l-[4px] bg-gradient-to-r from-[#f7d680] to-[#f2c766] border border-[#c9a24a] flex flex-col items-center">
        <div className="mt-[7px] text-[#222] text-[14px] leading-[14px]">«</div>
        <div className="mt-[2px] [writing-mode:vertical-rl] rotate-180 text-[12px] font-bold text-[#222] tracking-[0.2px]">Feedback</div>
      </div>
    </div>
  );
}
